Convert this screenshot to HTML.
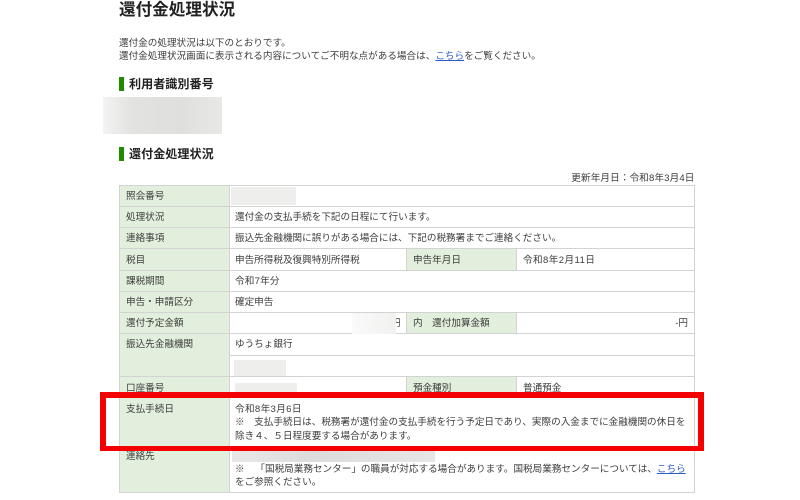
<!DOCTYPE html>
<html lang="ja">
<head>
<meta charset="utf-8">
<title>還付金処理状況</title>
<style>
html,body{margin:0;padding:0;background:#fff;}
#p{position:relative;width:800px;height:500px;overflow:hidden;background:#fff;font-family:"Liberation Sans","Noto Sans CJK JP",sans-serif;color:#3c3c3c;font-size:9.6px;filter:blur(.25px);}
#p div{position:absolute;}
.t{white-space:nowrap;line-height:14px;height:14px;margin-top:2px;}
#p .n{margin-top:0;}
.g{background:#e2efdc;}
.h{background:#d3d3d3;}
.b{background:#1f8c00;width:5px;height:14px;left:119px;}
a{color:#2a5bc8;text-decoration:underline;}
</style>
</head>
<body>
<div id="p">
<div class="t n" style="left:119px;top:0;font-size:16.6px;font-weight:bold;color:#222;line-height:20px;height:20px;">還付金処理状況</div>
<div class="t" style="left:119px;top:35px;">還付金の処理状況は以下のとおりです。</div>
<div class="t" style="left:119px;top:48px;">還付金処理状況画面に表示される内容についてご不明な点がある場合は、<a>こちら</a>をご覧ください。</div>

<div class="b" style="top:77px;"></div>
<div class="t n" style="left:129px;top:77px;font-size:12.1px;font-weight:bold;color:#222;">利用者識別番号</div>
<div style="left:103px;top:97px;width:119px;height:37px;background:linear-gradient(90deg,#f3f3f3,#e2e2e1 25%,#dfdfde 65%,#e8e8e7);"></div>

<div class="b" style="top:147px;"></div>
<div class="t n" style="left:129px;top:147px;font-size:12.1px;font-weight:bold;color:#222;">還付金処理状況</div>

<div class="t" style="right:105.5px;top:170px;letter-spacing:.12px;">更新年月日：令和8年3月4日</div>

<!-- green cells -->
<div class="g" style="left:119px;top:185px;width:110px;height:307px;"></div>
<div class="g" style="left:406px;top:248px;width:110px;height:22px;"></div>
<div class="g" style="left:406px;top:312px;width:110px;height:21px;"></div>
<div class="g" style="left:406px;top:376px;width:110px;height:21px;"></div>

<!-- horizontal lines -->
<div class="h" style="left:119px;top:185px;width:576px;height:1px;"></div>
<div class="h" style="left:119px;top:206px;width:576px;height:1px;"></div>
<div class="h" style="left:119px;top:227px;width:576px;height:1px;"></div>
<div class="h" style="left:119px;top:248px;width:576px;height:1px;"></div>
<div class="h" style="left:119px;top:270px;width:576px;height:1px;"></div>
<div class="h" style="left:119px;top:291px;width:576px;height:1px;"></div>
<div class="h" style="left:119px;top:312px;width:576px;height:1px;"></div>
<div class="h" style="left:119px;top:333px;width:576px;height:1px;"></div>
<div class="h" style="left:229px;top:355px;width:466px;height:1px;"></div>
<div class="h" style="left:119px;top:376px;width:576px;height:1px;"></div>
<div class="h" style="left:119px;top:397px;width:576px;height:1px;"></div>
<div class="h" style="left:119px;top:446px;width:576px;height:1px;"></div>
<div class="h" style="left:119px;top:492px;width:576px;height:1px;"></div>

<!-- vertical lines -->
<div class="h" style="left:119px;top:185px;width:1px;height:308px;"></div>
<div class="h" style="left:229px;top:185px;width:1px;height:308px;"></div>
<div class="h" style="left:694px;top:185px;width:1px;height:308px;"></div>
<div class="h" style="left:406px;top:248px;width:1px;height:22px;"></div>
<div class="h" style="left:516px;top:248px;width:1px;height:22px;"></div>
<div class="h" style="left:406px;top:312px;width:1px;height:21px;"></div>
<div class="h" style="left:516px;top:312px;width:1px;height:21px;"></div>
<div class="h" style="left:406px;top:376px;width:1px;height:21px;"></div>
<div class="h" style="left:516px;top:376px;width:1px;height:21px;"></div>

<!-- labels -->
<div class="t" style="left:126px;top:188px;">照会番号</div>
<div class="t" style="left:126px;top:209px;">処理状況</div>
<div class="t" style="left:126px;top:230px;">連絡事項</div>
<div class="t" style="left:126px;top:252px;">税目</div>
<div class="t" style="left:126px;top:273px;">課税期間</div>
<div class="t" style="left:126px;top:294px;">申告・申請区分</div>
<div class="t" style="left:126px;top:315px;">還付予定金額</div>
<div class="t" style="left:126px;top:336px;">振込先金融機関</div>
<div class="t" style="left:126px;top:380px;">口座番号</div>
<div class="t" style="left:126px;top:401px;">支払手続日</div>
<div class="t" style="left:126px;top:448px;">連絡先</div>

<!-- values -->
<div class="t" style="left:235px;top:209px;">還付金の支払手続を下記の日程にて行います。</div>
<div class="t" style="left:235px;top:230px;">振込先金融機関に誤りがある場合には、下記の税務署までご連絡ください。</div>
<div class="t" style="left:235px;top:252px;">申告所得税及復興特別所得税</div>
<div class="t" style="left:413px;top:252px;">申告年月日</div>
<div class="t" style="left:523px;top:252px;letter-spacing:.4px;">令和8年2月11日</div>
<div class="t" style="left:235px;top:273px;letter-spacing:.2px;">令和7年分</div>
<div class="t" style="left:235px;top:294px;">確定申告</div>
<div class="t" style="left:391px;top:315px;">円</div>
<div class="t" style="left:413px;top:315px;">内　還付加算金額</div>
<div class="t" style="right:112px;top:315px;">-円</div>
<div class="t" style="left:235px;top:336px;">ゆうちょ銀行</div>
<div class="t" style="left:413px;top:380px;">預金種別</div>
<div class="t" style="left:523px;top:380px;">普通預金</div>
<div class="t" style="left:235px;top:401px;letter-spacing:.35px;">令和8年3月6日</div>
<div class="t" style="left:235px;top:414px;">※　支払手続日は、税務署が還付金の支払手続を行う予定日であり、実際の入金までに金融機関の休日を</div>
<div class="t" style="left:235px;top:428px;">除き４、５日程度要する場合があります。</div>
<div class="t" style="left:235px;top:461px;">※　<span style="margin-left:6px;">「国税局業務センター」の職員が対応する場合があります。国税局業務センターについては、<a>こちら</a></span></div>
<div class="t" style="left:235px;top:474px;">をご参照ください。</div>

<!-- masked areas -->
<div style="left:231px;top:187px;width:65px;height:18px;background:#eeeeed;"></div>
<div style="left:352px;top:313px;width:44px;height:21px;background:linear-gradient(90deg,#fafafa,#f1f1f0);"></div>
<div style="left:234px;top:360px;width:52px;height:16px;background:#eeeeed;"></div>
<div style="left:235px;top:383px;width:62px;height:12px;background:#eeeeed;"></div>
<div style="left:232px;top:450px;width:203px;height:12px;background:linear-gradient(90deg,#e8e8e8,#dcdcdc 40%,#e6e6e6);"></div>

<!-- red box -->
<div style="left:100px;top:392px;width:592px;height:48px;border:6px solid #f50000;border-bottom-width:5px;border-right-width:6px;"></div>
</div>
</body>
</html>
